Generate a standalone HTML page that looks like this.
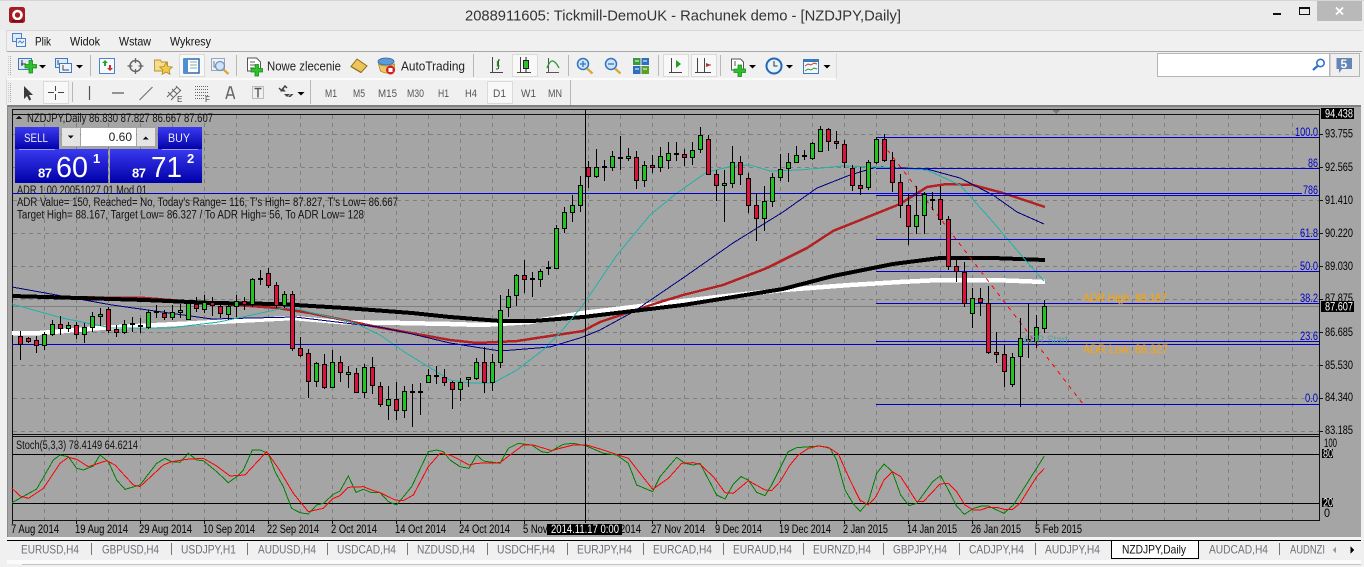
<!DOCTYPE html>
<html><head><meta charset="utf-8"><title>NZDJPY,Daily</title>
<style>
html,body{margin:0;padding:0;background:#f0f0f0;width:1364px;height:567px;overflow:hidden}
svg{display:block;position:absolute;left:0;top:0;font-family:"Liberation Sans",sans-serif;shape-rendering:crispEdges}
text{shape-rendering:auto}
.ic{shape-rendering:geometricPrecision}
.m{font-size:12px;fill:#111}
.tb{font-size:12.5px;fill:#222}
.tf{font-size:11px;fill:#555}
.ax{font-size:11.5px;fill:#000}
.dt{font-size:11.5px;fill:#000}
.ch{font-size:11.5px;fill:#111}
.fb{font-size:11.5px;fill:#0000c8}
.tab{font-size:12px;fill:#6f7078}
.sep{stroke:#b8b8b8;fill:none}
.arr{fill:#000}
</style></head><body>
<svg width="1364" height="567" viewBox="0 0 1364 567" xmlns="http://www.w3.org/2000/svg">
<!-- title bar -->
<rect width="1364" height="567" fill="#f0f0f0"/>
<rect width="1364" height="30" fill="#ebebeb"/>
<rect width="1364" height="1" fill="#d6d6d6"/>
<g class="ic"><rect x="9" y="7" width="16" height="16" rx="2.5" fill="#a81a22"/><circle cx="17.500" cy="15" r="4" fill="none" stroke="#fff" stroke-width="2.600"/><path d="M12 21h11" stroke="#7a0e14" stroke-width="2"/></g>
<text x="465" y="20.500" font-size="15" fill="#333" textLength="436" lengthAdjust="spacingAndGlyphs">2088911605: Tickmill-DemoUK - Rachunek demo - [NZDJPY,Daily]</text>
<rect x="1273" y="13" width="8" height="2" fill="#111"/>
<rect x="1299.500" y="7.500" width="10" height="7" fill="none" stroke="#111"/><rect x="1299" y="7" width="11" height="2" fill="#111"/>
<rect x="1317" y="1" width="45" height="20" fill="#b9b9b9"/>
<path class="ic" d="M1336 7.500l7 7M1343 7.500l-7 7" stroke="#fff" stroke-width="1.800"/>
<!-- menu bar -->
<rect x="6" y="30" width="1356" height="1" fill="#d9d9d9"/>
<rect x="6" y="31" width="1356" height="20" fill="#f0f0f0"/>
<rect x="6" y="51" width="1356" height="1" fill="#a8a8a8"/>
<rect x="6" y="30" width="1" height="75" fill="#d9d9d9"/>
<g class="ic"><rect x="12.500" y="33.500" width="9" height="8" fill="#dfe9f7" stroke="#4a80c8"/><rect x="16.500" y="38.500" width="9" height="8" fill="#eef3fb" stroke="#4a80c8"/><path d="M18 43l2-2 2 2 2-2" stroke="#4a80c8" fill="none"/></g>
<text class="m" x="35" y="45.500" textLength="16" lengthAdjust="spacingAndGlyphs">Plik</text>
<text class="m" x="70" y="45.500" textLength="30" lengthAdjust="spacingAndGlyphs">Widok</text>
<text class="m" x="119" y="45.500" textLength="32" lengthAdjust="spacingAndGlyphs">Wstaw</text>
<text class="m" x="170" y="45.500" textLength="41" lengthAdjust="spacingAndGlyphs">Wykresy</text>
<!-- toolbars -->
<rect x="6" y="52" width="830" height="27" fill="#f0f0f0"/>
<rect x="7" y="78" width="829" height="2" fill="#fbfbfb"/>
<rect x="836" y="53" width="1" height="26" fill="#dcdcdc"/>
<rect x="570" y="80" width="1" height="25" fill="#b8b8b8"/>
<path d="M10.500 56V76M10.500 83V102" stroke="#aaa" stroke-dasharray="1 1"/>
<path d="M8.500 56V76M8.500 83V102" stroke="#ccc" stroke-dasharray="1 1"/>
<!-- selected boxes -->
<g fill="#f8f8f8" stroke="#dadada">
<rect x="179.500" y="54.500" width="25" height="22"/><rect x="512.500" y="54.500" width="25" height="22"/><rect x="663.500" y="54.500" width="25" height="22"/><rect x="691.500" y="54.500" width="25" height="22"/><rect x="43.500" y="81.500" width="25" height="22"/><rect x="487.500" y="81.500" width="25" height="22"/>
</g>
<path class="sep" d="M90.500 55V76M236.500 55V76M473.500 54V77M568.500 55V76M658.500 55V76M720.500 55V76M72.500 82V102M310.500 80V104"/>
<g class="ic">
<!-- new chart -->
<rect x="18.500" y="58.500" width="13" height="11" fill="#dfe9f7" stroke="#3f78c4"/><path d="M22 60v6M21 64h5" stroke="#333" fill="none"/>
<path d="M29 60.500h3.500v4h4v3.500h-4v5h-3.500v-5h-4v-3.500h4z" fill="#2ec12e" stroke="#178a17" stroke-width=".8"/>
<path class="arr" d="M39 65h7l-3.500 3.500z"/>
<!-- profiles -->
<rect x="55.500" y="58.500" width="12" height="9" fill="#dfe9f7" stroke="#3f78c4"/><rect x="59.500" y="63.500" width="12" height="9" fill="#eef3fb" stroke="#3f78c4"/><path d="M58 60v5M63 65v5h6" stroke="#444" fill="none"/>
<path class="arr" d="M76 65h7l-3.500 3.500z"/>
<!-- market watch -->
<rect x="99.500" y="58.500" width="15" height="15" fill="#f7fafd" stroke="#4a85c9"/><path d="M105 60l3 3h-2v3h-2v-3h-2z" fill="#2aa52a"/><path d="M110 71l-3-3h2v-3h2v3h2z" fill="#d02a2a"/>
<!-- crosshair circle -->
<circle cx="135.500" cy="66" r="5.500" fill="none" stroke="#666" stroke-width="1.500"/><path d="M135.500 58v5M135.500 69v5M127.500 66h5M138.500 66h5" stroke="#666" stroke-width="1.300"/>
<!-- folder star -->
<path d="M154.500 60h6l1 2h6v9h-13z" fill="#f6dc8c" stroke="#b59234" stroke-width=".9"/>
<path d="M166 62.500l1.900 4 4.400.5-3.200 3 .9 4.300-4-2.200-4 2.200.9-4.300-3.200-3 4.400-.5z" fill="#f2c94c" stroke="#a98a20" stroke-width=".8"/>
<!-- navigator -->
<rect x="184" y="59" width="15" height="14" fill="#fff" stroke="#1f5fb0" stroke-width="1.400"/><rect x="184" y="59" width="4" height="14" fill="#4a90d8"/><path d="M190 62h7M190 65h7M190 68h7" stroke="#8aa" fill="none"/>
<!-- tester -->
<rect x="211.500" y="58.500" width="13" height="12" fill="#eef3fb" stroke="#93a8c0"/><path d="M214 61v6h8" stroke="#777" fill="none"/><circle cx="220" cy="66" r="4.500" fill="#cfe2f6" stroke="#6f93ba" stroke-width="1.300"/><path d="M223.500 69.500l5 4.500" stroke="#d8a73a" stroke-width="2.200"/>
<!-- new order -->
<path d="M247.500 58h9l4 4v9h-13z" fill="#fff" stroke="#555"/><path d="M250 62h5M250 65h7M250 68h4" stroke="#666" fill="none"/>
<path d="M255 64.500h3.500v4h4v3.500h-4v4h-3.500v-4h-4v-3.500h4z" fill="#2ec12e" stroke="#178a17" stroke-width=".8"/>
<!-- gold -->
<path d="M351 66.500l6-7.500 10 7-6 6.500z" fill="#ecc65a" stroke="#8d6b1a"/><path d="M351 66.500l10 6" stroke="#8d6b1a" stroke-width="1.200"/>
<!-- autotrading -->
<ellipse cx="386" cy="61.500" rx="8" ry="3.500" fill="#5a9bd8" stroke="#2d6ba8" stroke-width=".8"/><path d="M378.500 64q7 4 16 0v7q-8 4-14 0z" fill="#f0c860" stroke="#a8892e" stroke-width=".8"/>
<circle cx="390.500" cy="70" r="4.500" fill="#d81f1f"/><rect x="388.500" y="68" width="4" height="4" fill="#fff"/>
<!-- bars -->
<path d="M492.500 57v16M490 72.500h13M498.500 60v9M497 63h1M498 60h2M496 69h2" stroke="#444" fill="none"/><path d="M497.500 61v5h2" stroke="#1a9a1a" stroke-width="1.300" fill="none"/>
<!-- candles -->
<path d="M520.500 57v16M517 72.500h14" stroke="#444" fill="none"/><rect x="523.500" y="60.500" width="5" height="8" fill="#2ec12e" stroke="#222"/><path d="M526 57v3M526 69v3" stroke="#222"/>
<!-- line -->
<path d="M548.500 58v15M546 72.500h13" stroke="#555" fill="none"/><path d="M547 68q3-8 6-7t6 7" stroke="#2a9a2a" stroke-width="1.300" fill="none"/>
<!-- zoom in/out -->
<circle cx="583" cy="64" r="5.500" fill="#cfe4f8" stroke="#2f74bf" stroke-width="1.500"/><path d="M580 64h6M583 61v6" stroke="#2f74bf" stroke-width="1.300"/><path d="M587 68.500l5.500 5" stroke="#d8a73a" stroke-width="2.300"/>
<circle cx="611" cy="64" r="5.500" fill="#cfe4f8" stroke="#2f74bf" stroke-width="1.500"/><path d="M608 64h6" stroke="#2f74bf" stroke-width="1.300"/><path d="M615 68.500l5.500 5" stroke="#d8a73a" stroke-width="2.300"/>
<!-- tile -->
<rect x="633" y="58" width="7.500" height="7" fill="#3a9a3a"/><rect x="641.500" y="58" width="7.500" height="7" fill="#2f6fc0"/><rect x="633" y="66" width="7.500" height="8" fill="#2f6fc0"/><rect x="641.500" y="66" width="7.500" height="8" fill="#5aa02a"/>
<path d="M635 61h4M643 61h4M635 69h4M643 69h4" stroke="#fff" fill="none"/>
<!-- autoscroll -->
<path d="M671.500 58v15M669 72.500h13" stroke="#444" fill="none"/><path d="M676 60l5 4-5 4z" fill="#1f9f1f"/>
<!-- shift -->
<path d="M697.500 58v15M704.500 58v15M695 72.500h16" stroke="#444" fill="none"/><path d="M711 65l-5-2v4z" fill="#b0302a"/><path d="M706 65h5" stroke="#b0302a"/>
<!-- indicators -->
<path d="M731.500 59h9l3 3v8h-12z" fill="#fff" stroke="#555"/><path d="M735 61v5" stroke="#555"/>
<path d="M738 65h3.500v4h4v3.500h-4v4h-3.500v-4h-4v-3.500h4z" fill="#2ec12e" stroke="#178a17" stroke-width=".8"/>
<path class="arr" d="M749 65h7l-3.500 3.500z"/>
<!-- clock -->
<circle cx="774" cy="66" r="7.500" fill="#e8f2fb" stroke="#2168b5" stroke-width="2"/><path d="M774 61v5h3.500" stroke="#333" fill="none"/>
<path class="arr" d="M786 65h7l-3.500 3.500z"/>
<!-- templates -->
<rect x="803.500" y="59.500" width="15" height="14" fill="#f4f7fb" stroke="#3a78c0"/><rect x="804" y="60" width="14" height="2" fill="#3a78c0"/><path d="M805 66l3-2 3 1 3-2 3 1" stroke="#c03a2a" fill="none"/><path d="M805 71l3-2 3 1 3-2 3 1" stroke="#2a9a2a" fill="none"/>
<path class="arr" d="M823.500 65h7l-3.500 3.500z"/>
<!-- toolbar 2 -->
<path d="M24 86v13l3-3 2.200 4.500 2-1-2.200-4.500h4z" fill="#3a3a3a"/>
<path d="M48 92.500h6M58 92.500h6M55.500 86v5M55.500 94v6" stroke="#444" fill="none"/>
<path d="M89.500 86v14" stroke="#555" stroke-width="1.200"/>
<path d="M112 93h12" stroke="#555" stroke-width="1.200"/>
<path d="M139.500 100l13-13" stroke="#777" stroke-width="1.200"/>
<path d="M167 97l10-10M171 100l10-10M168 92l5 5M172 89l5 5M176 86l5 5" stroke="#666" fill="none"/>
<path d="M195 86.500h13M195 89.500h13M195 92.500h13M195 95.500h13M195 98.500h10" stroke="#666" stroke-dasharray="1 1"/>
<path d="M226 99l3.600-12h1.400l3.600 12M227.500 95h5.500" stroke="#666" stroke-width="1.500" fill="none"/>
<rect x="252.500" y="86.500" width="11" height="12" fill="none" stroke="#888" stroke-dasharray="1 1"/><path d="M254.500 88.500h7M258 88.500v9" stroke="#555" stroke-width="1.400"/>
<path d="M279 88l2.500 2.500L285 86l2 2" stroke="#444" stroke-width="1.500" fill="none"/><path d="M283 88.500l3 3h-6zM287 97l3-3h-6z" fill="#444"/><path d="M288 97l3-3h2.500l-3 3z" fill="#444"/>
<path class="arr" d="M297.500 92h7l-3.500 3.500z"/>
</g>
<text x="177" y="102" font-size="8" fill="#444">E</text>
<text x="205" y="102" font-size="8" fill="#444">F</text>
<text class="tb" x="267" y="70.500" textLength="74" lengthAdjust="spacingAndGlyphs">Nowe zlecenie</text>
<text class="tb" x="401" y="70.500" textLength="64" lengthAdjust="spacingAndGlyphs">AutoTrading</text>
<g class="tf">
<text x="325" y="97" textLength="12" lengthAdjust="spacingAndGlyphs">M1</text>
<text x="353" y="97" textLength="12" lengthAdjust="spacingAndGlyphs">M5</text>
<text x="378" y="97" textLength="19" lengthAdjust="spacingAndGlyphs">M15</text>
<text x="407" y="97" textLength="17" lengthAdjust="spacingAndGlyphs">M30</text>
<text x="438" y="97" textLength="11" lengthAdjust="spacingAndGlyphs">H1</text>
<text x="465" y="97" textLength="12" lengthAdjust="spacingAndGlyphs">H4</text>
<text x="493" y="97" textLength="13" lengthAdjust="spacingAndGlyphs">D1</text>
<text x="521" y="97" textLength="15" lengthAdjust="spacingAndGlyphs">W1</text>
<text x="548" y="97" textLength="14" lengthAdjust="spacingAndGlyphs">MN</text>
</g>
<!-- search -->
<rect x="1157.500" y="53.500" width="172" height="23" fill="#fff" stroke="#b5b5b5"/>
<rect x="1330" y="53.500" width="29.500" height="23" fill="#efefef" stroke="#b5b5b5"/>
<g class="ic"><circle cx="1320.500" cy="63" r="3.700" fill="none" stroke="#2f6fd0" stroke-width="1.600"/><path d="M1317.500 66l-4.500 4" stroke="#2f6fd0" stroke-width="2.200"/>
<path d="M1336.500 58h15.500v11h-10l-3 4v-4h-2.500z" fill="#6585b5"/></g>
<text x="1340.500" y="68" font-size="12" font-weight="bold" fill="#fff">5</text>
<!-- MDI chart area -->
<rect x="7" y="105" width="1354" height="432" fill="#a5a5a5"/>
<rect x="7" y="105" width="1354" height="2" fill="#7f7f7f"/>
<rect x="7" y="105" width="1" height="432" fill="#8c8c8c"/>
<path d="M12.500 109.500H1319.500V520.500H12.500zM12 114.500H1319M12 434.500H1319M12 436.500H1319" fill="none" stroke="#111"/>
<!-- grid -->
<path d="M44.500 115V434M76.500 115V434M108.500 115V434M140.500 115V434M172.500 115V434M204.500 115V434M236.500 115V434M268.500 115V434M300.500 115V434M332.500 115V434M364.500 115V434M396.500 115V434M428.500 115V434M460.500 115V434M492.500 115V434M524.500 115V434M556.500 115V434M588.500 115V434M620.500 115V434M652.500 115V434M684.500 115V434M716.500 115V434M748.500 115V434M780.500 115V434M812.500 115V434M844.500 115V434M876.500 115V434M908.500 115V434M940.500 115V434M972.500 115V434M1004.500 115V434M1036.500 115V434M1068.500 115V434M1100.500 115V434M1132.500 115V434M1164.500 115V434M1196.500 115V434M1228.500 115V434M1260.500 115V434M1292.500 115V434" stroke="#7e7e7e" stroke-dasharray="4 4" fill="none"/>
<path d="M44.500 437V520M76.500 437V520M108.500 437V520M140.500 437V520M172.500 437V520M204.500 437V520M236.500 437V520M268.500 437V520M300.500 437V520M332.500 437V520M364.500 437V520M396.500 437V520M428.500 437V520M460.500 437V520M492.500 437V520M524.500 437V520M556.500 437V520M588.500 437V520M620.500 437V520M652.500 437V520M684.500 437V520M716.500 437V520M748.500 437V520M780.500 437V520M812.500 437V520M844.500 437V520M876.500 437V520M908.500 437V520M940.500 437V520M972.500 437V520M1004.500 437V520M1036.500 437V520M1068.500 437V520M1100.500 437V520M1132.500 437V520M1164.500 437V520M1196.500 437V520M1228.500 437V520M1260.500 437V520M1292.500 437V520" stroke="#7e7e7e" stroke-dasharray="4 4" fill="none"/>
<path d="M13 134.500H1319M13 167.500H1319M13 200.500H1319M13 233.500H1319M13 266.500H1319M13 299.500H1319M13 332.500H1319M13 365.500H1319M13 398.500H1319M13 431.500H1319" stroke="#7e7e7e" stroke-dasharray="4 4" fill="none"/>
<path d="M13 306.500H1319" stroke="#808080"/>
<path d="M1056 110h-4l4 4 4-4z" fill="#777"/>
<!-- moving averages -->
<polyline fill="none" stroke="#fff" stroke-width="4.500" points="12,333 40,333 100,328 157,325 217,322 293,318 340,322 400,323 450,324 483,325 530,322 583,313 633,307 717,297 783,290 850,285 900,282 940,280 993,280 1045,282"/>
<polyline fill="none" stroke="#b22222" stroke-width="2.500" points="12,296 45,297 145,298 210,303 277,308 310,313 377,327 450,340 477,343 517,341 583,331 600,322 657,303 683,295 723,285 767,268 807,248 833,231 900,204 927,187 947,184 973,185 1003,193 1045,207"/>
<polyline fill="none" stroke="#000080" stroke-width="1" points="12,287 112,305 162,312 212,319 295,317 345,323 379,327 412,334 450,343 500,351 550,347 583,337 600,330 633,312 683,278 733,243 783,212 817,188 850,175 877,167 927,169 960,178 993,195 1017,212 1044,224"/>
<polyline fill="none" stroke="#000" stroke-width="4" points="12,296 79,298 145,300 212,303 279,304 345,308 412,313 450,317 500,321 533,321 583,317 633,311 683,305 733,297 783,289 833,276 893,264 940,258 993,258 1045,260"/>
<polyline fill="none" stroke="#20b2aa" stroke-width="1" points="12,304 62,318 112,328 169,328 219,322 289,307 355,323 380,335 406,353 450,380 470,383 493,383 517,370 543,350 560,333 583,305 617,255 650,215 677,193 707,172 733,166 750,165 770,171 800,170 843,166 877,167 927,170 960,185 993,222 1027,262 1044,281"/>
<!-- fibo + levels -->
<path d="M876 137.500H1319M876 168.500H1319M12 193.500H1302M876 195.500H1319M876 239.500H1319M876 271.500H1319M876 303.500H1319M876 341.500H1319M12 344.500H1319M876 404.500H1319" stroke="#0000c8" fill="none"/>
<path d="M882 143L1083 404" stroke="#f00" stroke-dasharray="4 5" fill="none"/>
<!-- stoch lines -->
<path d="M13 454.500H1319M13 503.500H1319" stroke="#000"/>
<g transform="translate(0,330) scale(.33333)" fill="none" stroke="#008000">
<polyline vector-effect="non-scaling-stroke" points="36,518 110,477 160,390 180,375 205,380 230,415 250,420 280,408 300,375 325,395 350,450 375,478 420,465 470,400 495,385 515,395 540,397 565,370 590,390 610,392 650,425 685,458 710,440 730,420 757,360 780,360 805,370 825,425 850,470 875,535 900,548 925,552 950,525 970,520 1000,493 1020,483 1045,438 1068,487 1090,478 1115,488 1140,488 1165,515 1190,525 1235,470 1285,365 1310,360 1330,365 1350,390"/>
<polyline vector-effect="non-scaling-stroke" stroke="#f00" points="36,475 60,498 85,505 130,475 180,400 205,382 230,388 265,410 320,392 345,405 400,465 420,470 490,405 515,395 560,388 610,385 650,408 690,438 735,435 800,365 835,415 880,490 925,545 970,535 1000,505 1020,497 1045,472 1090,470 1115,480 1140,488 1185,510 1210,512 1240,495 1285,410 1320,370 1350,375"/>
</g>
<g transform="translate(450,330) scale(.33333)" fill="none" stroke="#008000">
<polyline vector-effect="non-scaling-stroke" points="0,390 30,410 57,415 80,375 100,393 150,400 175,355 205,340 245,345 275,365 295,368 340,343 370,340 410,348 460,370 500,375 535,400 560,465 608,485 630,440 680,382 705,400 730,405 750,400 800,495 825,507 850,462 873,440 895,450 920,487 945,497 965,465 1015,365 1040,353 1080,350 1110,348 1140,355 1160,390 1185,480 1210,522 1232,545"/>
<polyline vector-effect="non-scaling-stroke" stroke="#f00" points="0,375 30,390 57,405 80,400 150,398 180,375 220,345 250,345 305,362 330,355 370,345 410,345 460,360 535,385 608,478 655,445 695,400 730,398 750,403 790,440 825,488 850,490 895,452 945,480 965,482 990,455 1020,405 1045,375 1075,355 1105,348 1135,352 1165,372 1200,450 1232,515"/>
</g>
<g transform="translate(860,430) scale(.33333)" fill="none" stroke="#008000">
<polyline vector-effect="non-scaling-stroke" points="0,245 25,215 50,130 72,102 97,125 122,195 147,227 170,220 218,155 242,137 265,180 290,228 313,253 340,235 365,228 385,228 432,250 460,225 553,78"/>
<polyline vector-effect="non-scaling-stroke" stroke="#f00" points="0,210 25,225 48,200 72,150 97,125 122,140 170,215 190,215 240,162 265,160 290,185 315,225 340,240 362,240 385,232 410,232 432,238 458,238 480,220 530,140 553,115"/>
</g>
<!-- candle wicks -->
<path transform="translate(.5,0)" stroke="#000" fill="none" d="M12 335V343M20 331V360M28 337V343M36 336V353M44 332V350M52 320V336M60 316V335M68 322V332M76 322V339M84 323V343M92 312V332M100 308V326M108 307V333M116 325V337M124 320V334M132 317V332M140 318V333M148 310V329M156 305V318M164 310V320M172 305V320M180 304V318M188 302V320M196 297V312M204 295V313M212 297V316M220 302V318M228 303V320M236 295V317M244 297V310M252 278V307M260 270V285M268 268V288M276 282V308M284 291V308M292 291V351M300 337V357M308 349V398M316 362V387M324 354V389M332 350V388M340 356V382M348 366V388M356 368V393M364 364V398M372 357V394M380 382V407M388 386V420M396 382V420M404 386V418M412 384V427M420 383V415M428 369V383M436 366V384M444 369V386M452 381V409M460 378V401M468 378V387M476 358V380M484 347V393M492 354V391M500 295V368M508 289V317M516 274V306M524 260V293M532 272V297M540 269V287M548 261V275M556 225V268M564 207V233M572 195V222M580 176V212M588 161V188M596 149V178M604 160V181M612 151V171M620 136V170M628 148V161M636 151V189M644 161V187M652 155V173M660 147V172M668 142V169M676 142V161M684 149V166M692 142V165M700 127V153M708 135V175M716 170V201M724 170V222M732 146V188M740 156V185M748 173V213M756 193V241M764 186V231M772 173V207M780 154V181M788 153V182M796 146V163M804 150V160M812 142V160M820 126V152M828 128V151M836 131V149M844 140V168M852 165V191M860 167V195M868 160V190M876 137V164M884 134V162M892 152V192M900 174V218M908 194V245M916 186V234M924 192V234M932 192V210M940 186V225M948 216V270M956 259V282M964 262V307M972 288V328M980 288V316M988 286V354M996 332V363M1004 344V387M1012 353V387M1020 318V407M1028 303V358M1036 315V348M1044 300V333"/>
<!-- dojis -->
<path stroke="#000" stroke-width="2" fill="none" d="M130 324h5M138 326h5M154 312h5M258 279h5M410 392h5M418 392h5M434 376h5M530 279h5M546 268h5M602 167h5M674 154h5M802 156h5M930 200h5"/>
<!-- bodies green -->
<path transform="translate(-1.500,.5)" fill="#22c422" stroke="#000" d="M44 334h4V345h-4zM52 324h4V334h-4zM68 325h4V328h-4zM84 327h4V334h-4zM92 316h4V327h-4zM100 314h4V316h-4zM124 324h4V332h-4zM148 312h4V327h-4zM172 312h4V317h-4zM180 310h4V312h-4zM188 303h4V319h-4zM204 302h4V309h-4zM228 306h4V314h-4zM236 301h4V306h-4zM252 279h4V304h-4zM284 294h4V305h-4zM316 363h4V381h-4zM332 362h4V387h-4zM348 372h4V374h-4zM364 367h4V392h-4zM388 399h4V405h-4zM404 391h4V410h-4zM428 375h4V382h-4zM460 382h4V389h-4zM468 377h4V379h-4zM476 362h4V378h-4zM492 362h4V382h-4zM500 310h4V362h-4zM508 296h4V307h-4zM516 275h4V295h-4zM540 271h4V279h-4zM556 228h4V268h-4zM564 212h4V228h-4zM572 205h4V212h-4zM580 185h4V205h-4zM596 167h4V176h-4zM612 156h4V167h-4zM628 156h4V158h-4zM644 165h4V180h-4zM660 156h4V167h-4zM668 153h4V160h-4zM692 150h4V157h-4zM700 135h4V149h-4zM724 183h4V185h-4zM732 162h4V183h-4zM764 201h4V218h-4zM772 177h4V201h-4zM780 169h4V177h-4zM788 162h4V168h-4zM796 155h4V162h-4zM812 143h4V158h-4zM820 129h4V151h-4zM868 162h4V187h-4zM876 139h4V162h-4zM916 215h4V226h-4zM924 194h4V215h-4zM972 298h4V313h-4zM1012 357h4V384h-4zM1020 338h4V356h-4zM1036 327h4V341h-4zM1044 306h4V328h-4z"/>
<!-- bodies red -->
<path transform="translate(-1.500,.5)" fill="#dc143c" stroke="#000" d="M20 336h4V344h-4zM28 338h4V341h-4zM36 340h4V345h-4zM60 324h4V328h-4zM76 325h4V334h-4zM108 309h4V330h-4zM116 329h4V332h-4zM164 313h4V317h-4zM196 304h4V308h-4zM212 302h4V305h-4zM220 306h4V313h-4zM244 301h4V304h-4zM268 273h4V285h-4zM276 285h4V305h-4zM292 294h4V348h-4zM300 348h4V355h-4zM308 353h4V381h-4zM324 364h4V387h-4zM340 362h4V372h-4zM356 373h4V392h-4zM372 367h4V385h-4zM380 386h4V404h-4zM396 399h4V410h-4zM444 377h4V382h-4zM452 382h4V389h-4zM484 362h4V382h-4zM524 275h4V279h-4zM588 167h4V176h-4zM620 157h4V158h-4zM636 157h4V180h-4zM652 165h4V167h-4zM684 154h4V157h-4zM708 139h4V174h-4zM716 174h4V185h-4zM740 162h4V174h-4zM748 178h4V205h-4zM756 205h4V218h-4zM828 129h4V141h-4zM836 141h4V143h-4zM844 144h4V162h-4zM852 168h4V185h-4zM860 185h4V188h-4zM884 139h4V160h-4zM892 160h4V182h-4zM900 182h4V205h-4zM908 205h4V226h-4zM940 199h4V219h-4zM948 219h4V266h-4zM956 266h4V271h-4zM964 272h4V303h-4zM980 298h4V302h-4zM988 303h4V352h-4zM996 352h4V354h-4zM1004 354h4V371h-4zM1028 339h4V341h-4z"/>
<!-- crosshair -->
<path d="M585.500 110V523" stroke="#000"/>
<!-- chart labels -->
<path d="M16 119h6l-3-3.500z" fill="#111"/>
<text class="ch" x="27" y="122" textLength="186" lengthAdjust="spacingAndGlyphs">NZDJPY,Daily  86.830 87.827 86.667 87.607</text>
<text class="ch" x="17" y="194" textLength="130" lengthAdjust="spacingAndGlyphs">ADR 1.00 20051027 01 Mod 01</text>
<text class="ch" x="17" y="206" textLength="381" lengthAdjust="spacingAndGlyphs">ADR Value= 150, Reached= No, Today's Range= 116, T's High= 87.827, T's Low= 86.667</text>
<text class="ch" x="17" y="218.500" textLength="347" lengthAdjust="spacingAndGlyphs">Target High= 88.167, Target Low= 86.327 / To ADR High= 56, To ADR Low= 128</text>
<text class="ch" x="16" y="449" textLength="122" lengthAdjust="spacingAndGlyphs">Stoch(5,3,3) 78.4149 64.6214</text>
<g class="fb">
<text x="1295" y="136" textLength="23" lengthAdjust="spacingAndGlyphs">100.0</text>
<text x="1308" y="167" textLength="10" lengthAdjust="spacingAndGlyphs">86</text>
<text x="1303" y="194" textLength="15" lengthAdjust="spacingAndGlyphs">786</text>
<text x="1300" y="237" textLength="18" lengthAdjust="spacingAndGlyphs">61.8</text>
<text x="1300" y="270" textLength="18" lengthAdjust="spacingAndGlyphs">50.0</text>
<text x="1300" y="302" textLength="18" lengthAdjust="spacingAndGlyphs">38.2</text>
<text x="1300" y="340" textLength="18" lengthAdjust="spacingAndGlyphs">23.6</text>
<text x="1305" y="402" textLength="13" lengthAdjust="spacingAndGlyphs">0.0</text>
</g>
<text x="1083" y="302" font-size="11.500" fill="#ffa500" textLength="84" lengthAdjust="spacingAndGlyphs">ADR High: 88.167</text>
<text x="1083" y="353" font-size="11.500" fill="#ffa500" textLength="85" lengthAdjust="spacingAndGlyphs">ADR Low: 86.327</text>
<text x="1023" y="344" font-size="11.500" fill="#5f9ea0" textLength="45" lengthAdjust="spacingAndGlyphs">ADR Start</text>
<!-- one click panel -->
<defs>
<linearGradient id="bl" x1="0" y1="0" x2="0" y2="1"><stop offset="0" stop-color="#3a3af0"/><stop offset="1" stop-color="#0000a8"/></linearGradient>
</defs>
<rect x="15" y="127" width="44" height="23" fill="url(#bl)"/>
<rect x="158" y="127" width="44" height="23" fill="url(#bl)"/>
<rect x="15" y="149" width="93" height="34" fill="url(#bl)"/>
<rect x="110" y="149" width="92" height="34" fill="url(#bl)"/>
<path d="M19 149.500H55M162 149.500H198" stroke="#9a9af0"/>
<rect x="62" y="128" width="18" height="18" fill="#e4e4e4"/><rect x="81" y="128" width="55" height="18" fill="#fff"/><rect x="137" y="128" width="18" height="18" fill="#e4e4e4"/>
<path d="M67.500 135.500h6l-3 3z" fill="#111"/><path d="M142.500 139.500h6l-3-3z" fill="#111"/>
<text x="132" y="141" font-size="12" fill="#222" text-anchor="end">0.60</text>
<text x="24" y="142" font-size="12" fill="#e8e8ff" textLength="24" lengthAdjust="spacingAndGlyphs">SELL</text>
<text x="168" y="142" font-size="12" fill="#e8e8ff" textLength="22" lengthAdjust="spacingAndGlyphs">BUY</text>
<g fill="#fff">
<text x="38" y="177.500" font-size="13" font-weight="bold" textLength="14">87</text>
<text x="56" y="177" font-size="29" textLength="32" lengthAdjust="spacingAndGlyphs">60</text>
<text x="93" y="163" font-size="13" font-weight="bold">1</text>
<text x="132" y="177.500" font-size="13" font-weight="bold" textLength="14">87</text>
<text x="151" y="177" font-size="29" textLength="31" lengthAdjust="spacingAndGlyphs">71</text>
<text x="187" y="163" font-size="13" font-weight="bold">2</text>
</g>
<!-- right axis -->
<path d="M1320 134.500h3M1320 167.500h3M1320 200.500h3M1320 233.500h3M1320 266.500h3M1320 299.500h3M1320 332.500h3M1320 365.500h3M1320 398.500h3M1320 431.500h3" stroke="#111"/>
<g class="ax">
<text x="1325" y="137.500" textLength="28" lengthAdjust="spacingAndGlyphs">93.755</text>
<text x="1325" y="171" textLength="28" lengthAdjust="spacingAndGlyphs">92.565</text>
<text x="1325" y="204" textLength="28" lengthAdjust="spacingAndGlyphs">91.410</text>
<text x="1325" y="237" textLength="28" lengthAdjust="spacingAndGlyphs">90.220</text>
<text x="1325" y="270" textLength="28" lengthAdjust="spacingAndGlyphs">89.030</text>
<text x="1325" y="302" textLength="28" lengthAdjust="spacingAndGlyphs">87.875</text>
<text x="1325" y="336" textLength="28" lengthAdjust="spacingAndGlyphs">86.685</text>
<text x="1325" y="369" textLength="28" lengthAdjust="spacingAndGlyphs">85.530</text>
<text x="1325" y="401" textLength="28" lengthAdjust="spacingAndGlyphs">84.340</text>
<text x="1325" y="434" textLength="28" lengthAdjust="spacingAndGlyphs">83.185</text>
<text x="1324" y="447" textLength="13" lengthAdjust="spacingAndGlyphs">100</text>
<text x="1324" y="517" textLength="6" lengthAdjust="spacingAndGlyphs">0</text>
</g>
<rect x="1321" y="108" width="33" height="11" fill="#000"/>
<rect x="1321" y="301" width="33" height="11" fill="#000"/>
<rect x="1322" y="449" width="11" height="9" fill="#000"/>
<rect x="1322" y="498" width="11" height="9" fill="#000"/>
<g font-size="11.500" fill="#fff">
<text x="1325" y="117.500" textLength="28" lengthAdjust="spacingAndGlyphs">94.438</text>
<text x="1325" y="310.500" textLength="28" lengthAdjust="spacingAndGlyphs">87.607</text>
<text x="1323" y="457.500" textLength="10" lengthAdjust="spacingAndGlyphs">80</text>
<text x="1323" y="506.500" textLength="10" lengthAdjust="spacingAndGlyphs">20</text>
</g>
<!-- date axis -->
<path d="M12.500 521v3M76.500 521v3M140.500 521v3M204.500 521v3M268.500 521v3M332.500 521v3M396.500 521v3M460.500 521v3M524.500 521v3M652.500 521v3M716.500 521v3M780.500 521v3M844.500 521v3M908.500 521v3M972.500 521v3M1036.500 521v3" stroke="#111"/>
<g class="dt">
<text x="11" y="533" textLength="48" lengthAdjust="spacingAndGlyphs">7 Aug 2014</text>
<text x="75" y="533" textLength="53" lengthAdjust="spacingAndGlyphs">19 Aug 2014</text>
<text x="139" y="533" textLength="53" lengthAdjust="spacingAndGlyphs">29 Aug 2014</text>
<text x="203" y="533" textLength="52" lengthAdjust="spacingAndGlyphs">10 Sep 2014</text>
<text x="267" y="533" textLength="52" lengthAdjust="spacingAndGlyphs">22 Sep 2014</text>
<text x="331" y="533" textLength="46" lengthAdjust="spacingAndGlyphs">2 Oct 2014</text>
<text x="395" y="533" textLength="51" lengthAdjust="spacingAndGlyphs">14 Oct 2014</text>
<text x="459" y="533" textLength="51" lengthAdjust="spacingAndGlyphs">24 Oct 2014</text>
<text x="523" y="533" textLength="48" lengthAdjust="spacingAndGlyphs">5 Nov 2014</text>
<text x="587" y="533" textLength="54" lengthAdjust="spacingAndGlyphs">17 Nov 2014</text>
<text x="651" y="533" textLength="54" lengthAdjust="spacingAndGlyphs">27 Nov 2014</text>
<text x="715" y="533" textLength="47" lengthAdjust="spacingAndGlyphs">9 Dec 2014</text>
<text x="779" y="533" textLength="52" lengthAdjust="spacingAndGlyphs">19 Dec 2014</text>
<text x="843" y="533" textLength="45" lengthAdjust="spacingAndGlyphs">2 Jan 2015</text>
<text x="907" y="533" textLength="50" lengthAdjust="spacingAndGlyphs">14 Jan 2015</text>
<text x="971" y="533" textLength="50" lengthAdjust="spacingAndGlyphs">26 Jan 2015</text>
<text x="1035" y="533" textLength="47" lengthAdjust="spacingAndGlyphs">5 Feb 2015</text>
</g>
<rect x="547" y="524" width="75" height="11" fill="#000"/>
<text x="551" y="533" font-size="11.500" fill="#fff" textLength="68" lengthAdjust="spacingAndGlyphs">2014.11.17 0:00</text>
<!-- tab strip -->
<rect x="7" y="537" width="1354" height="3" fill="#f4f4f4"/>
<rect x="7" y="540" width="1354" height="1" fill="#000"/>
<rect x="7" y="541" width="1354" height="19" fill="#f0f0f0"/>
<rect x="7" y="560" width="1354" height="4" fill="#fbfbfb"/>
<rect x="22" y="564" width="1339" height="1" fill="#c4c4c4"/>
<path d="M91.500 543V555M171.500 543V555M247.500 543V555M327.500 543V555M407.500 543V555M487.500 543V555M567.500 543V555M643.500 543V555M723.500 543V555M803.500 543V555M883.500 543V555M959.500 543V555M1035.500 543V555M1279.500 543V555" stroke="#777"/>
<rect x="1112" y="541" width="86" height="18" fill="#fff"/>
<path d="M1111.500 541V558.500H1198.500V541" fill="none" stroke="#000"/>
<g class="tab">
<text x="21" y="553.500" textLength="58" lengthAdjust="spacingAndGlyphs">EURUSD,H4</text>
<text x="102" y="553.500" textLength="57" lengthAdjust="spacingAndGlyphs">GBPUSD,H4</text>
<text x="181" y="553.500" textLength="55" lengthAdjust="spacingAndGlyphs">USDJPY,H1</text>
<text x="258" y="553.500" textLength="58" lengthAdjust="spacingAndGlyphs">AUDUSD,H4</text>
<text x="337" y="553.500" textLength="59" lengthAdjust="spacingAndGlyphs">USDCAD,H4</text>
<text x="417" y="553.500" textLength="58" lengthAdjust="spacingAndGlyphs">NZDUSD,H4</text>
<text x="497" y="553.500" textLength="58" lengthAdjust="spacingAndGlyphs">USDCHF,H4</text>
<text x="577" y="553.500" textLength="55" lengthAdjust="spacingAndGlyphs">EURJPY,H4</text>
<text x="653" y="553.500" textLength="59" lengthAdjust="spacingAndGlyphs">EURCAD,H4</text>
<text x="733" y="553.500" textLength="59" lengthAdjust="spacingAndGlyphs">EURAUD,H4</text>
<text x="813" y="553.500" textLength="58" lengthAdjust="spacingAndGlyphs">EURNZD,H4</text>
<text x="893" y="553.500" textLength="54" lengthAdjust="spacingAndGlyphs">GBPJPY,H4</text>
<text x="969" y="553.500" textLength="55" lengthAdjust="spacingAndGlyphs">CADJPY,H4</text>
<text x="1045" y="553.500" textLength="55" lengthAdjust="spacingAndGlyphs">AUDJPY,H4</text>
<text x="1209" y="553.500" textLength="59" lengthAdjust="spacingAndGlyphs">AUDCAD,H4</text>
<text x="1290" y="553.500" textLength="35" lengthAdjust="spacingAndGlyphs">AUDNZI</text>
</g>
<text x="1122" y="553.500" font-size="12" fill="#111" textLength="64" lengthAdjust="spacingAndGlyphs">NZDJPY,Daily</text>
<path d="M1336 546.500v7l-3.500-3.500z" fill="#999"/><path d="M1350.500 546.500v7l3.500-3.500z" fill="#000"/>
<rect x="0" y="105" width="7" height="462" fill="#f0f0f0"/>
<rect x="1361" y="105" width="3" height="462" fill="#f0f0f0"/>
</svg>
</body></html>
